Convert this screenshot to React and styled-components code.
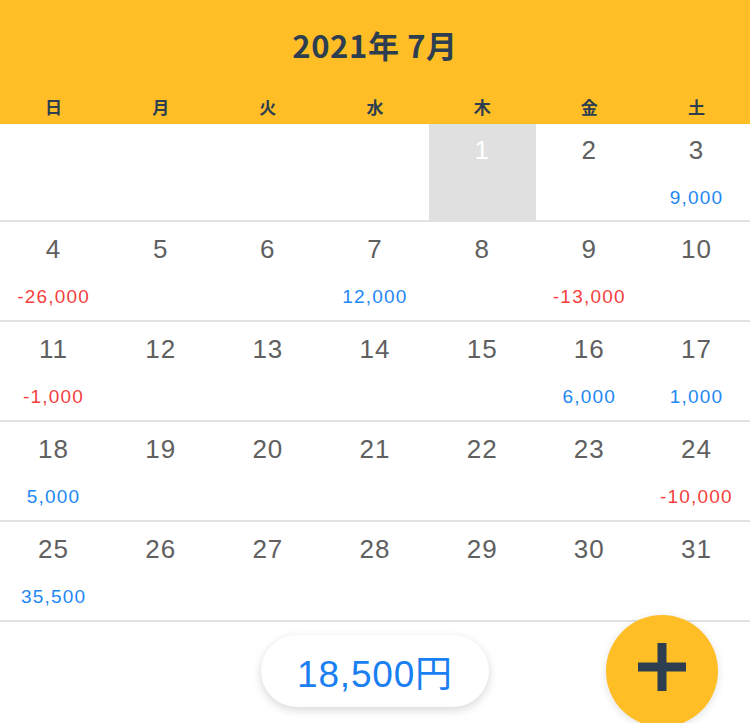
import React from "react";
import styled, { createGlobalStyle } from "styled-components";

const GlobalStyle = createGlobalStyle`
  html, body { margin: 0; padding: 0; background: #fff; }
  body { font-family: "Liberation Sans", "Noto Sans CJK JP", sans-serif; }
  * { box-sizing: border-box; }
`;

const YELLOW = "#FFBE26";
const DARK = "#2c3e50";

const Page = styled.div`
  width: 750px;
  height: 723px;
  overflow: hidden;
  position: relative;
  display: flex;
  flex-direction: column;
`;

const Header = styled.header`
  height: 124px;
  background: ${YELLOW};
  display: flex;
  flex-direction: column;
`;

const Title = styled.h1`
  margin: 0;
  height: 90px;
  display: flex;
  align-items: center;
  justify-content: center;
  font-family: "Noto Sans CJK JP", sans-serif;
  font-weight: 700;
  font-size: 31px;
  letter-spacing: 0.6px;
  color: ${DARK};
  padding-bottom: 2px;
`;

const Weekdays = styled.div`
  display: grid;
  grid-template-columns: repeat(7, 1fr);
  height: 34px;
  align-items: center;
`;

const Weekday = styled.div`
  text-align: center;
  font-family: "Noto Sans CJK JP", sans-serif;
  font-weight: 700;
  font-size: 17px;
  color: ${DARK};
  margin-top: -2px;
`;

const Grid = styled.div`
  display: flex;
  flex-direction: column;
`;

const Week = styled.div`
  display: grid;
  grid-template-columns: repeat(7, 1fr);
  height: ${(p) => (p.$first ? 98 : 100)}px;
  border-bottom: 2px solid #e2e2e2;
`;

const Cell = styled.div`
  display: flex;
  flex-direction: column;
  align-items: center;
  padding-top: ${(p) => (p.$first ? 11 : 12)}px;
  background: ${(p) => (p.$today ? "#e0e0e0" : "transparent")};
  margin-bottom: ${(p) => (p.$today ? "-2px" : "0")};
`;

const DayNum = styled.div`
  font-size: 26px;
  line-height: 30px;
  letter-spacing: 1px;
  color: ${(p) => (p.$today ? "#ffffff" : "#606060")};
`;

const Amount = styled.div`
  margin-top: 22px;
  font-size: 19px;
  line-height: 22px;
  letter-spacing: 1.2px;
  color: ${(p) => (p.$neg ? "#f43f3f" : "#1e88f5")};
`;

const Footer = styled.div`
  flex: 1;
  display: flex;
  align-items: center;
  justify-content: center;
  padding-bottom: 4px;
`;

const Total = styled.div`
  width: 228px;
  height: 72px;
  border-radius: 36px;
  background: #fff;
  box-shadow: 0 3px 10px rgba(0, 0, 0, 0.16);
  display: flex;
  align-items: center;
  justify-content: center;
  font-size: 37px;
  letter-spacing: 0.8px;
  color: #1a80f2;
  font-family: "Liberation Sans", "Noto Sans CJK JP", sans-serif;
`;

const Fab = styled.button`
  position: absolute;
  left: 606px;
  top: 615px;
  width: 112px;
  height: 112px;
  border-radius: 50%;
  border: none;
  background: ${YELLOW};
  box-shadow: 0 2px 8px rgba(0, 0, 0, 0.12);
  display: flex;
  align-items: center;
  justify-content: center;
  padding: 0 0 8px 0;
  cursor: pointer;
`;

const amounts = {
  3: 9000,
  4: -26000,
  7: 12000,
  9: -13000,
  11: -1000,
  16: 6000,
  17: 1000,
  18: 5000,
  24: -10000,
  25: 35500,
};

const fmt = (n) => (n < 0 ? "-" : "") + Math.abs(n).toLocaleString("en-US");

export default function App() {
  const days = ["日", "月", "火", "水", "木", "金", "土"];
  const cells = [null, null, null, null];
  for (let d = 1; d <= 31; d++) cells.push(d);
  const weeks = [];
  for (let i = 0; i < cells.length; i += 7) weeks.push(cells.slice(i, i + 7));

  return (
    <>
      <GlobalStyle />
      <Page>
        <Header>
          <Title>2021年 7月</Title>
          <Weekdays>
            {days.map((d) => (
              <Weekday key={d}>{d}</Weekday>
            ))}
          </Weekdays>
        </Header>
        <Grid>
          {weeks.map((w, wi) => (
            <Week key={wi} $first={wi === 0}>
              {w.map((d, di) => (
                <Cell key={di} $first={wi === 0} $today={d === 1}>
                  {d && <DayNum $today={d === 1}>{d}</DayNum>}
                  {d && amounts[d] !== undefined && (
                    <Amount $neg={amounts[d] < 0}>{fmt(amounts[d])}</Amount>
                  )}
                </Cell>
              ))}
            </Week>
          ))}
        </Grid>
        <Footer>
          <Total>18,500円</Total>
        </Footer>
        <Fab aria-label="追加">
          <svg width="48" height="48" viewBox="0 0 48 48">
            <rect x="19.5" y="0" width="9" height="48" fill={DARK} />
            <rect x="0" y="19.5" width="48" height="9" fill={DARK} />
          </svg>
        </Fab>
      </Page>
    </>
  );
}
